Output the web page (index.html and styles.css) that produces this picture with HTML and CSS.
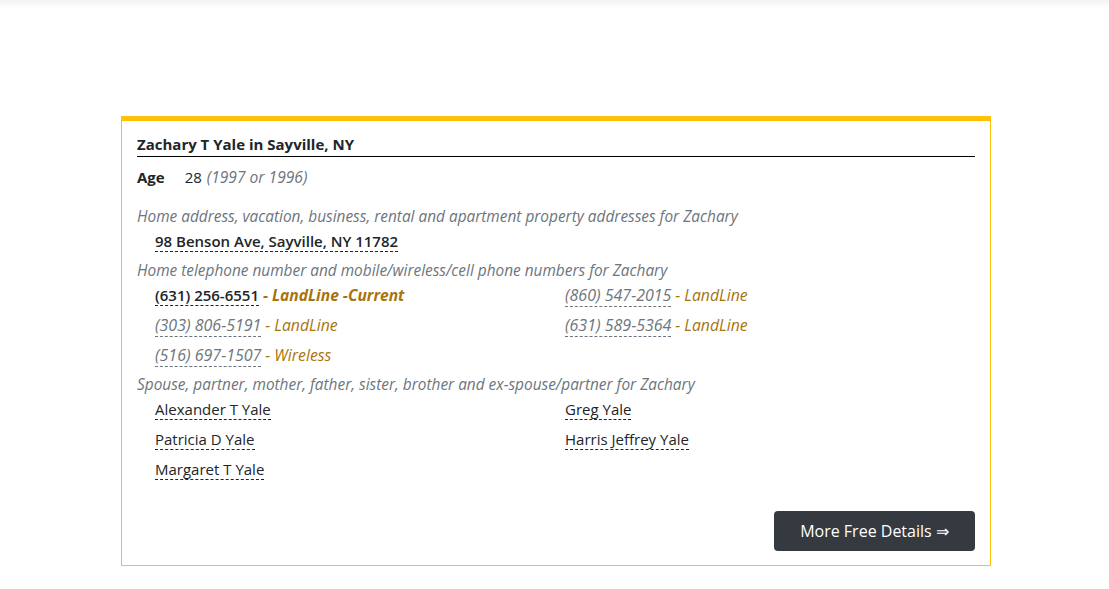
FILE: index.html
```html
<!DOCTYPE html>
<html lang="en">
<head>
<meta charset="utf-8">
<title>Zachary T Yale in Sayville, NY</title>
<link rel="stylesheet" href="styles.css">
</head>
<body>
<div class="topshade"></div>
<div class="page">
  <section class="card">
    <h2 class="card-title">Zachary T Yale in Sayville, NY</h2>
    <div class="age"><span class="age-label">Age</span><span class="age-val">28</span> <em class="muted">(1997 or 1996)</em></div>

    <p class="label">Home address, vacation, business, rental and apartment property addresses for Zachary</p>
    <ul class="items single">
      <li><a class="lnk strong" href="#">98 Benson Ave, Sayville, NY 11782</a></li>
    </ul>

    <p class="label">Home telephone number and mobile/wireless/cell phone numbers for Zachary</p>
    <ul class="items grid">
      <li><a class="lnk strong" href="#">(631) 256-6551</a> <span class="type cur">- LandLine -Current</span></li>
      <li><a class="lnk old" href="#">(860) 547-2015</a> <span class="type">- LandLine</span></li>
      <li><a class="lnk old" href="#">(303) 806-5191</a> <span class="type">- LandLine</span></li>
      <li><a class="lnk old" href="#">(631) 589-5364</a> <span class="type">- LandLine</span></li>
      <li><a class="lnk old" href="#">(516) 697-1507</a> <span class="type">- Wireless</span></li>
    </ul>

    <p class="label">Spouse, partner, mother, father, sister, brother and ex-spouse/partner for Zachary</p>
    <ul class="items grid">
      <li><a class="lnk" href="#">Alexander T Yale</a></li>
      <li><a class="lnk" href="#">Greg Yale</a></li>
      <li><a class="lnk" href="#">Patricia D Yale</a></li>
      <li><a class="lnk" href="#">Harris Jeffrey Yale</a></li>
      <li><a class="lnk" href="#">Margaret T Yale</a></li>
    </ul>

    <div class="actions">
      <a class="btn" href="#">More Free Details &rArr;</a>
    </div>
  </section>
</div>
</body>
</html>
```

FILE: styles.css
```css
* { box-sizing: border-box; }
html, body { margin: 0; padding: 0; background: #fff; }
body {
  font-family: "Open Sans", "Noto Sans", "Liberation Sans", sans-serif;
  font-size: 15px;
  color: #212529;
}
.topshade {
  height: 8px;
  background: linear-gradient(#f3f3f3, #ffffff);
}
.page {
  padding-top: 108px;
  padding-left: 121px;
}
.card {
  width: 870px;
  border: 1px solid #ffc107;
  border-top: 5px solid #ffc107;
  padding: 12px 15px 14px 15px;
}
.card-title {
  margin: 0;
  font-size: 15px;
  font-weight: 700;
  line-height: 22px;
  padding-bottom: 1px;
  border-bottom: 1px solid #000;
}
.age {
  line-height: 24px;
  margin-top: 8px;
  margin-bottom: 16px;
}
.age-label { font-weight: 700; margin-right: 20px; }
.age-val { margin-right: 1px; }
.muted { color: #6c757d; font-size: 15.6px; }
.label {
  margin: 0;
  line-height: 24px;
  font-size: 15.4px;
  font-style: italic;
  color: #6c757d;
}
.items {
  list-style: none;
  margin: 0;
  padding: 0 0 0 18px;
}
.items.grid {
  display: grid;
  grid-template-columns: 410px 410px;
}
.items li {
  height: 30px;
  line-height: 24px;
}
.lnk {
  color: #212529;
  text-decoration: none;
  border-bottom: 1px dashed #212529;
}
.lnk.strong { font-weight: 600; }
.lnk.old {
  color: #6c757d;
  font-style: italic;
  font-size: 16px;
  border-bottom-color: #6c757d;
}
.type {
  color: #a8740a;
  font-style: italic;
  font-size: 15.8px;
}
.type.cur { font-weight: 700; font-size: 15.6px; }
.actions {
  display: flex;
  justify-content: flex-end;
  margin-top: 24px;
}
.btn {
  display: inline-block;
  width: 201px;
  height: 40px;
  line-height: 40px;
  text-align: center;
  background: #343a40;
  color: #fff;
  border-radius: 4px;
  text-decoration: none;
  font-size: 16px;
}
```
